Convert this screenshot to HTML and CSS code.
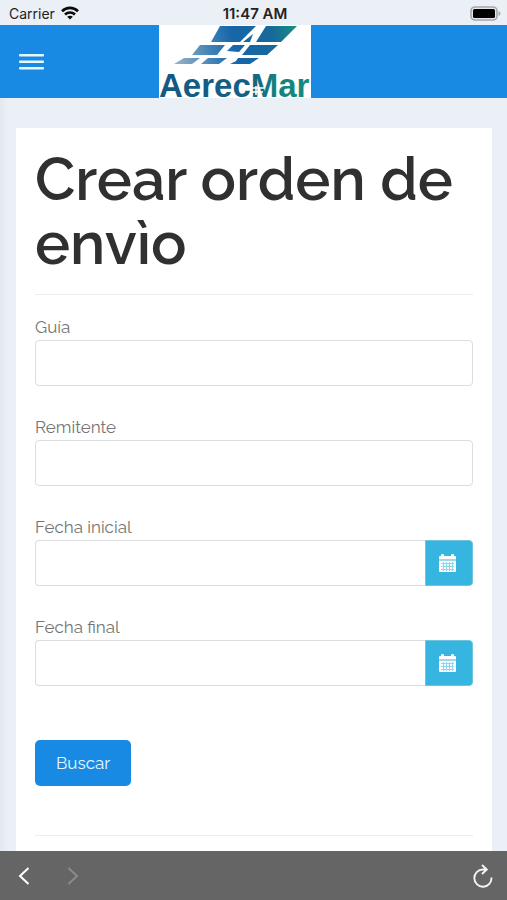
FILE: index.html
```html
<!DOCTYPE html>
<html lang="es">
<head>
<meta charset="utf-8">
<meta name="viewport" content="width=device-width, initial-scale=1">
<title>Crear orden de envìo</title>
<link rel="stylesheet" href="styles.css">
</head>
<body>
<div class="status">
  <div class="carrier">
    <span>Carrier</span>
    <svg width="18" height="14" viewBox="0 0 18 14" fill="none" stroke="#0b0b0b" stroke-width="2.6" aria-hidden="true">
      <path d="M1 5.2C5.6.8 12.4.8 17 5.2"/>
      <path d="M4 8.5C6.8 5.8 11.2 5.8 14 8.5"/>
      <path d="M9 13.6 6.2 10.8C7.8 9.3 10.2 9.3 11.8 10.8Z" fill="#0b0b0b" stroke="none"/>
    </svg>
  </div>
  <span class="clock">11:47 AM</span>
  <svg class="battery" width="31" height="15" viewBox="0 0 31 15" aria-hidden="true">
    <rect x="1" y="1" width="26" height="13" rx="4" fill="#e4e6ea" stroke="#a5a7aa" stroke-width="1.6"/>
    <rect x="3" y="3" width="22" height="9" rx="1.5" fill="#000"/>
    <path d="M28.5 5v5q2-1 2-2.500t-2-2.500z" fill="#a5a7aa"/>
  </svg>
</div>
<header class="topbar">
  <button class="menu" type="button" aria-label="Menú">
    <svg width="25" height="16" viewBox="0 0 25 16" fill="#e6f7ff" aria-hidden="true">
      <rect y="0" width="25" height="2.500" rx="1"/><rect y="6.500" width="25" height="2.500" rx="1"/><rect y="13" width="25" height="2.500" rx="1"/>
    </svg>
  </button>
  <a class="logo" href="#" aria-label="AerecMar">
    <svg width="152" height="73" viewBox="0 0 152 73" aria-hidden="true">
      <defs>
        <linearGradient id="tile" gradientUnits="userSpaceOnUse" x1="15" y1="40" x2="138" y2="10">
          <stop offset="0" stop-color="#9fb4c8"/><stop offset=".3" stop-color="#4484b6"/><stop offset=".5" stop-color="#1666aa"/><stop offset=".8" stop-color="#17689a"/><stop offset="1" stop-color="#188c80"/>
        </linearGradient>
        <linearGradient id="word" gradientUnits="userSpaceOnUse" x1="0" y1="0" x2="152" y2="0">
          <stop offset="0" stop-color="#135983"/><stop offset=".6" stop-color="#155f84"/><stop offset=".75" stop-color="#13807f"/><stop offset="1" stop-color="#138b7f"/>
        </linearGradient>
      </defs>
      <rect width="152" height="73" fill="#fff"/>
      <g fill="url(#tile)">
        <path d="M61 1h36L81 17H52z"/>
        <path d="M107 1h31l-16 16H97z"/>
        <path d="M41 20h25l-8 10H33z"/>
        <path d="M74 20h12l-6 7-12-1z"/>
        <path d="M94 9 84 17h7z"/>
        <path d="M91 20h28l-11 10H83z"/>
        <path d="M25 33h16l-8 6H15z"/>
        <path d="M49 33h19l-8 6H42z"/>
        <path d="M79 33h21l-9 6H71l6-3z"/>
      </g>
      <text class="wordmark" x="0" y="72" fill="url(#word)">AerecMar</text>
      <path d="M88 63h17M91 67h13M97 61v9" stroke="#fff" stroke-width="1.500" fill="none"/>
    </svg>
  </a>
</header>
<main class="page">
  <form class="card">
    <h1>Crear orden de envìo</h1>
    <hr>
    <div class="field">
      <label for="guia">Guía</label>
      <input id="guia" type="text">
    </div>
    <div class="field">
      <label for="remitente">Remitente</label>
      <input id="remitente" type="text">
    </div>
    <div class="field">
      <label for="inicial">Fecha inicial</label>
      <div class="group">
        <input id="inicial" type="text">
        <button class="pick" type="button" aria-label="Elegir fecha inicial">
          <svg width="17" height="18" viewBox="0 0 17 18" aria-hidden="true">
            <path fill="#fff" d="M1 2h1V1q0-1 1.500-1T5 1v1h7V1q0-1 1.500-1T15 1v1h1q1 0 1 1v2.500H0V3q0-1 1-1zM0 6.500h17V17q0 1-1 1H1q-1 0-1-1z"/>
            <path stroke="#8fd7ec" fill="none" d="M2 9.500h13M2 12.500h13M2 15.500h13M4.500 8v9M7.500 8v9M10.500 8v9M13.500 8v9"/>
          </svg>
        </button>
      </div>
    </div>
    <div class="field">
      <label for="final">Fecha final</label>
      <div class="group">
        <input id="final" type="text">
        <button class="pick" type="button" aria-label="Elegir fecha final">
          <svg width="17" height="18" viewBox="0 0 17 18" aria-hidden="true">
            <path fill="#fff" d="M1 2h1V1q0-1 1.500-1T5 1v1h7V1q0-1 1.500-1T15 1v1h1q1 0 1 1v2.500H0V3q0-1 1-1zM0 6.500h17V17q0 1-1 1H1q-1 0-1-1z"/>
            <path stroke="#8fd7ec" fill="none" d="M2 9.500h13M2 12.500h13M2 15.500h13M4.500 8v9M7.500 8v9M10.500 8v9M13.500 8v9"/>
          </svg>
        </button>
      </div>
    </div>
    <button class="submit" type="button">Buscar</button>
    <hr>
  </form>
</main>
<nav class="toolbar" aria-label="Navegador">
  <button type="button" aria-label="Atrás">
    <svg width="12" height="18" viewBox="0 0 12 18" fill="none" stroke="#fff" stroke-width="2" aria-hidden="true"><path d="M10.500 1 2 9l8.500 8"/></svg>
  </button>
  <button type="button" aria-label="Adelante" disabled>
    <svg width="12" height="18" viewBox="0 0 12 18" fill="none" stroke="#8b8b8b" stroke-width="2" aria-hidden="true"><path d="M1.500 1 10 9l-8.500 8"/></svg>
  </button>
  <button class="reload" type="button" aria-label="Recargar">
    <svg width="20" height="24" viewBox="0 0 20 24" fill="none" stroke="#f5f5f5" stroke-width="1.900" aria-hidden="true"><path d="M18.500 13.500A8.600 8.600 0 1 1 9.900 5.500H14M9 1l4.800 4.500-4.800 4.500"/></svg>
  </button>
</nav>
</body>
</html>
```
FILE: styles.css
```css
* { box-sizing: border-box; }
body {
  margin: 0;
  height: 100vh;
  display: flex;
  flex-direction: column;
  overflow: hidden;
  background: #ebeff6;
  color: #757575;
  font-family: Raleway, Lato, sans-serif;
  font-size: 17px;
}
button { padding: 0; border: 0; background: none; font: inherit; }
svg { display: block; }
.status {
  flex: none;
  display: grid;
  grid-template-columns: 1fr auto 1fr;
  align-items: center;
  padding: 1px 6px 0 9px;
  height: 25px;
  color: #222;
  font-family: Inter, sans-serif;
  font-size: 14px;
}
.carrier { display: flex; align-items: center; gap: 6px; }
.clock { font-size: 15px; font-weight: 600; }
.battery { justify-self: end; }
.topbar {
  flex: none;
  display: grid;
  grid-template-columns: 1fr auto 1fr;
  align-items: center;
  padding: 0 56px 0 19px;
  background: #198ae3;
}
.menu { justify-self: start; }
.logo { grid-column: 2; }
.logo svg { overflow: visible; }
.wordmark { font: bold 33px "Liberation Sans", sans-serif; }
.page {
  flex: 1;
  min-height: 0;
  overflow: hidden;
  padding: 30px 15px 0 16px;
  background: linear-gradient(90deg, #e3e7ef, #ebeff6 8px);
}
.card { padding: 20px 19px 60px; background: #fff; }
h1 {
  margin: 0 0 18px;
  color: #303031;
  font-size: 59px;
  font-weight: 600;
  line-height: 64px;
}
hr { margin: 0 0 20px; border: 0; border-top: 1px solid #ececee; }
.field { margin-bottom: 29px; }
label { display: block; line-height: 25px; }
input {
  display: block;
  width: 100%;
  height: 46px;
  padding: 0 12px;
  border: 1px solid #dcdddf;
  border-radius: 4px;
  background: #fff;
  font: inherit;
}
.group { display: flex; }
.group input { flex: 1; min-width: 0; border-right: 0; border-radius: 4px 0 0 4px; }
.pick {
  display: grid;
  place-items: center;
  width: 48px;
  height: 46px;
  padding-right: 3px;
  border: 1px solid #6fc4df;
  border-radius: 0 4px 4px 0;
  background: #35b5df;
}
.submit {
  display: block;
  margin: 54px 0 49px;
  padding: 0 21px;
  height: 46px;
  border-radius: 5px;
  background: #198ae3;
  color: #e9f8ff;
}
.toolbar {
  flex: none;
  display: flex;
  align-items: center;
  gap: 37px;
  height: 49px;
  padding: 0 14px 0 18px;
  background: #656565;
}
.reload { margin-left: auto; }
```
